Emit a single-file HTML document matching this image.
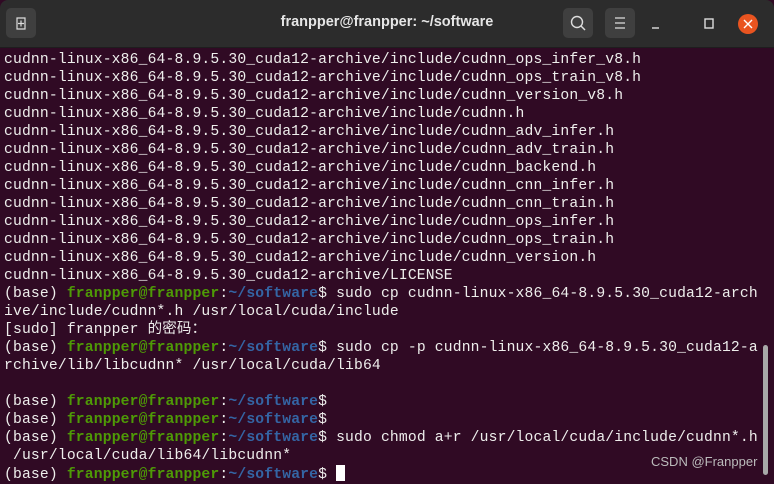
<!DOCTYPE html>
<html><head><style>
html,body{margin:0;padding:0;width:774px;height:480px;overflow:hidden;background:#300a24}
.bar{position:absolute;left:0;top:0;width:774px;height:47px;background:#2c2c2c;border-radius:8px 8px 0 0;border-bottom:1px solid #1e1e1e}
.title{position:absolute;left:0;width:774px;top:14px;text-align:center;color:#e6e6e6;font:bold 14.5px "Liberation Sans",sans-serif}
.btn{position:absolute;top:8px;width:30px;height:30px;background:#3f3f3f;border-radius:5px}
.term{position:absolute;left:4px;top:51px;font:14.7px/18px "Liberation Mono",monospace;letter-spacing:0.16px;color:#eeeeec;white-space:pre}
.g{color:#4e9a06;font-weight:bold}.b{color:#3465a4;font-weight:bold}
.cur{display:inline-block;width:9px;height:16px;background:#fff;vertical-align:-3px}
</style></head><body>
<div class="bar">
<div class="btn" style="left:6px"><svg width="30" height="30"><path d="M11 10v11h8V10z M11 10h8" stroke="#ddd" fill="none" stroke-width="1.2"/><path d="M15 12.5v6M12 15.5h6" stroke="#ddd" stroke-width="1.2"/></svg></div>
<div class="title">franpper@franpper: ~/software</div>
<div class="btn" style="left:563px"><svg width="30" height="30"><circle cx="14" cy="14" r="5.5" stroke="#ddd" fill="none" stroke-width="1.4"/><path d="M18 18l4 4" stroke="#ddd" stroke-width="1.5"/></svg></div>
<div class="btn" style="left:605px"><svg width="30" height="30"><path d="M10 10h10M10 15h10M10 20h10" stroke="#ddd" stroke-width="1.3"/></svg></div>
<svg style="position:absolute;left:645px;top:13px" width="120" height="22"><path d="M7 15h7" stroke="#ddd" stroke-width="1.4"/><rect x="60" y="6" width="8" height="9" stroke="#ddd" fill="none" stroke-width="1.4"/><circle cx="103" cy="11" r="10" fill="#e95420"/><path d="M99 7l8 8M107 7l-8 8" stroke="#fff" stroke-width="1.4"/></svg>
</div>
<div class="term">cudnn-linux-x86_64-8.9.5.30_cuda12-archive/include/cudnn_ops_infer_v8.h
cudnn-linux-x86_64-8.9.5.30_cuda12-archive/include/cudnn_ops_train_v8.h
cudnn-linux-x86_64-8.9.5.30_cuda12-archive/include/cudnn_version_v8.h
cudnn-linux-x86_64-8.9.5.30_cuda12-archive/include/cudnn.h
cudnn-linux-x86_64-8.9.5.30_cuda12-archive/include/cudnn_adv_infer.h
cudnn-linux-x86_64-8.9.5.30_cuda12-archive/include/cudnn_adv_train.h
cudnn-linux-x86_64-8.9.5.30_cuda12-archive/include/cudnn_backend.h
cudnn-linux-x86_64-8.9.5.30_cuda12-archive/include/cudnn_cnn_infer.h
cudnn-linux-x86_64-8.9.5.30_cuda12-archive/include/cudnn_cnn_train.h
cudnn-linux-x86_64-8.9.5.30_cuda12-archive/include/cudnn_ops_infer.h
cudnn-linux-x86_64-8.9.5.30_cuda12-archive/include/cudnn_ops_train.h
cudnn-linux-x86_64-8.9.5.30_cuda12-archive/include/cudnn_version.h
cudnn-linux-x86_64-8.9.5.30_cuda12-archive/LICENSE
(base) <span class="g">franpper@franpper</span>:<span class="b">~/software</span>$ sudo cp cudnn-linux-x86_64-8.9.5.30_cuda12-arch
ive/include/cudnn*.h /usr/local/cuda/include
[sudo] franpper <span style="font-family:'Noto Sans CJK SC',sans-serif;font-size:14.5px;line-height:1">的密码：</span>
(base) <span class="g">franpper@franpper</span>:<span class="b">~/software</span>$ sudo cp -p cudnn-linux-x86_64-8.9.5.30_cuda12-a
rchive/lib/libcudnn* /usr/local/cuda/lib64

(base) <span class="g">franpper@franpper</span>:<span class="b">~/software</span>$
(base) <span class="g">franpper@franpper</span>:<span class="b">~/software</span>$
(base) <span class="g">franpper@franpper</span>:<span class="b">~/software</span>$ sudo chmod a+r /usr/local/cuda/include/cudnn*.h
 /usr/local/cuda/lib64/libcudnn*
(base) <span class="g">franpper@franpper</span>:<span class="b">~/software</span>$ <span class="cur"></span></div>
<div style="position:absolute;left:763px;top:345px;width:5px;height:130px;background:#a8a8a8;border-radius:3px"></div>
<div style="position:absolute;left:651px;top:454px;color:#bbb;font:13px 'Liberation Sans',sans-serif">CSDN @Franpper</div>
</body></html>
